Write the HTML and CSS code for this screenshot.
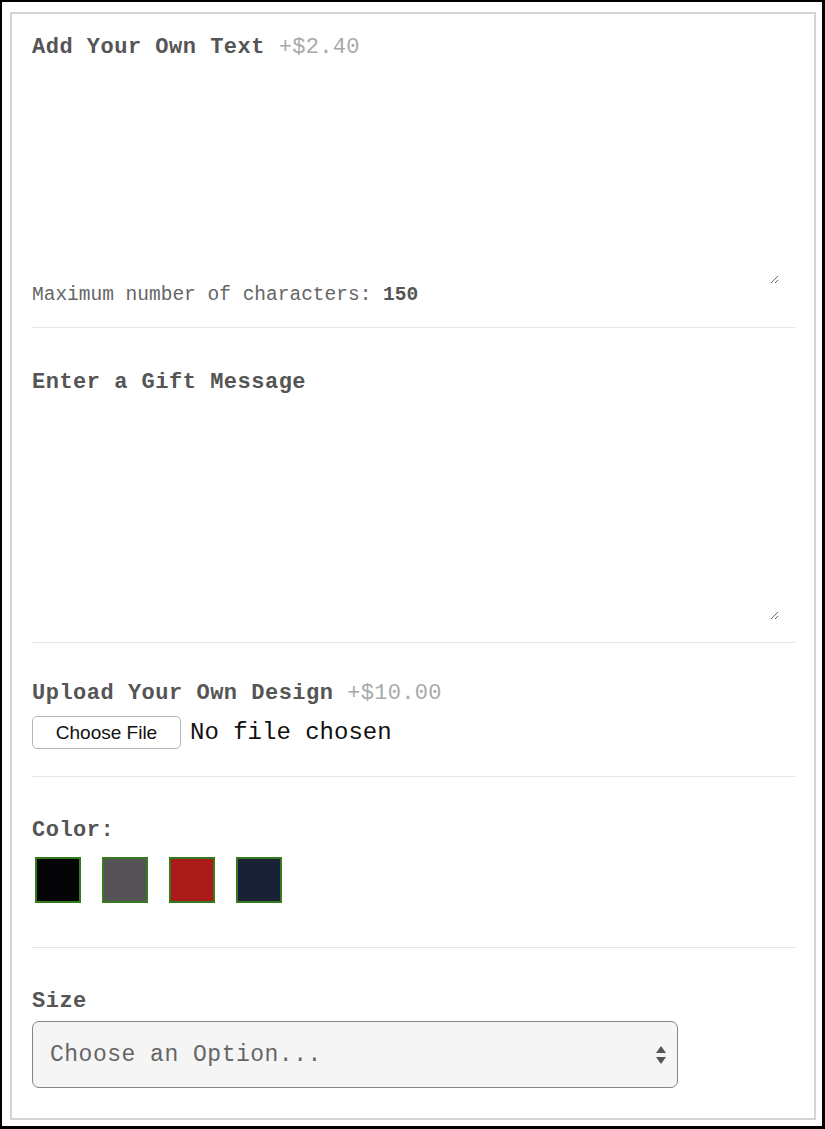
FILE: index.html
```html
<!DOCTYPE html>
<html lang="en">
<head>
<meta charset="utf-8">
<title>Product options</title>
<link rel="stylesheet" href="styles.css">
</head>
<body>
<div class="frame">
  <div class="panel">
    <section class="opt opt-text">
      <label class="heading">Add Your Own Text <span class="price">+$2.40</span></label>
      <textarea class="area area-1"></textarea>
      <p class="note">Maximum number of characters: <b>150</b></p>
    </section>
    <section class="opt opt-gift">
      <label class="heading">Enter a Gift Message</label>
      <textarea class="area area-2"></textarea>
    </section>
    <section class="opt opt-upload">
      <label class="heading">Upload Your Own Design <span class="price">+$10.00</span></label>
      <input class="file" type="file">
    </section>
    <section class="opt opt-color">
      <label class="heading">Color:</label>
      <div class="swatches">
        <span class="swatch sw-black"></span>
        <span class="swatch sw-gray"></span>
        <span class="swatch sw-red"></span>
        <span class="swatch sw-navy"></span>
      </div>
    </section>
    <section class="opt opt-size">
      <label class="heading">Size</label>
      <div class="select">
        <span class="select-text">Choose an Option...</span>
        <svg class="arrows" width="12" height="20" viewBox="0 0 12 20">
          <path d="M6 1 L11 8 L1 8 Z" fill="#555"/>
          <path d="M6 19 L11 12 L1 12 Z" fill="#555"/>
        </svg>
      </div>
    </section>
  </div>
</div>
</body>
</html>
```
FILE: styles.css
```css
html, body {
  margin: 0;
  padding: 0;
  background: #fff;
}
.frame {
  box-sizing: border-box;
  width: 825px;
  height: 1129px;
  border-style: solid;
  border-color: #000;
  border-width: 2px 3px 3px 2px;
  padding: 10px 6px 6px 8px;
  display: flex;
}
.panel {
  flex: 1;
  border: 2px solid #d4d4d4;
  padding: 0 19px 0 20px;
  display: flex;
  flex-direction: column;
  font-family: "Liberation Mono", "DejaVu Sans Mono", monospace;
}
.opt {
  display: flex;
  flex-direction: column;
  border-bottom: 1px solid #e6e6e6;
}
.heading {
  display: block;
  font-size: 22px;
  line-height: 30px;
  font-weight: bold;
  color: #555;
  letter-spacing: 0.5px;
}
.price {
  font-weight: normal;
  color: #a9a9a9;
  letter-spacing: 0.3px;
}
.area {
  box-sizing: border-box;
  border: none;
  outline: none;
  resize: vertical;
  width: calc(100% - 16px);
  background: #fff;
  margin: 0;
  padding: 0;
  font-family: inherit;
}
.opt-text { padding: 19px 0 21px; }
.area-1 { height: 221px; }
.note {
  margin: 0;
  font-size: 19.5px;
  line-height: 22px;
  color: #666;
  letter-spacing: 0;
}
.note b { color: #555; }
.opt-gift { padding: 40px 0 22px; }
.area-2 { height: 222px; }
.opt-upload { padding: 36px 0 27px; }
.file {
  margin: 7px 0 0;
  font-family: "Liberation Mono", monospace;
  font-size: 24px;
  color: #111;
  height: 33px;
}
.file::file-selector-button {
  font-family: "Liberation Sans", Arial, sans-serif;
  font-size: 19px;
  color: #111;
  background: #fff;
  border: 1px solid #b5b5b5;
  border-radius: 5px;
  height: 33px;
  width: 149px;
  padding: 0;
  margin-right: 9px;
}
.opt-color { padding: 39px 0 44px; }
.swatches {
  display: flex;
  gap: 21px;
  margin: 11px 0 0 3px;
}
.swatch {
  box-sizing: border-box;
  width: 46px;
  height: 46px;
  border: 2px solid #357a1e;
}
.sw-black { background: #040306; }
.sw-gray { background: #545255; }
.sw-red { background: #ab1b19; }
.sw-navy { background: #1a2035; }
.opt-size {
  padding: 39px 0 0;
  border-bottom: none;
}
.select {
  box-sizing: border-box;
  margin-top: 4px;
  width: 646px;
  height: 67px;
  border: 1px solid #858585;
  border-radius: 7px;
  background: #f5f5f5;
  display: flex;
  align-items: center;
  justify-content: space-between;
  padding: 0 10px 0 17px;
}
.select-text {
  font-size: 23px;
  color: #666;
  letter-spacing: 0.5px;
}
.arrows { display: block; }
```
